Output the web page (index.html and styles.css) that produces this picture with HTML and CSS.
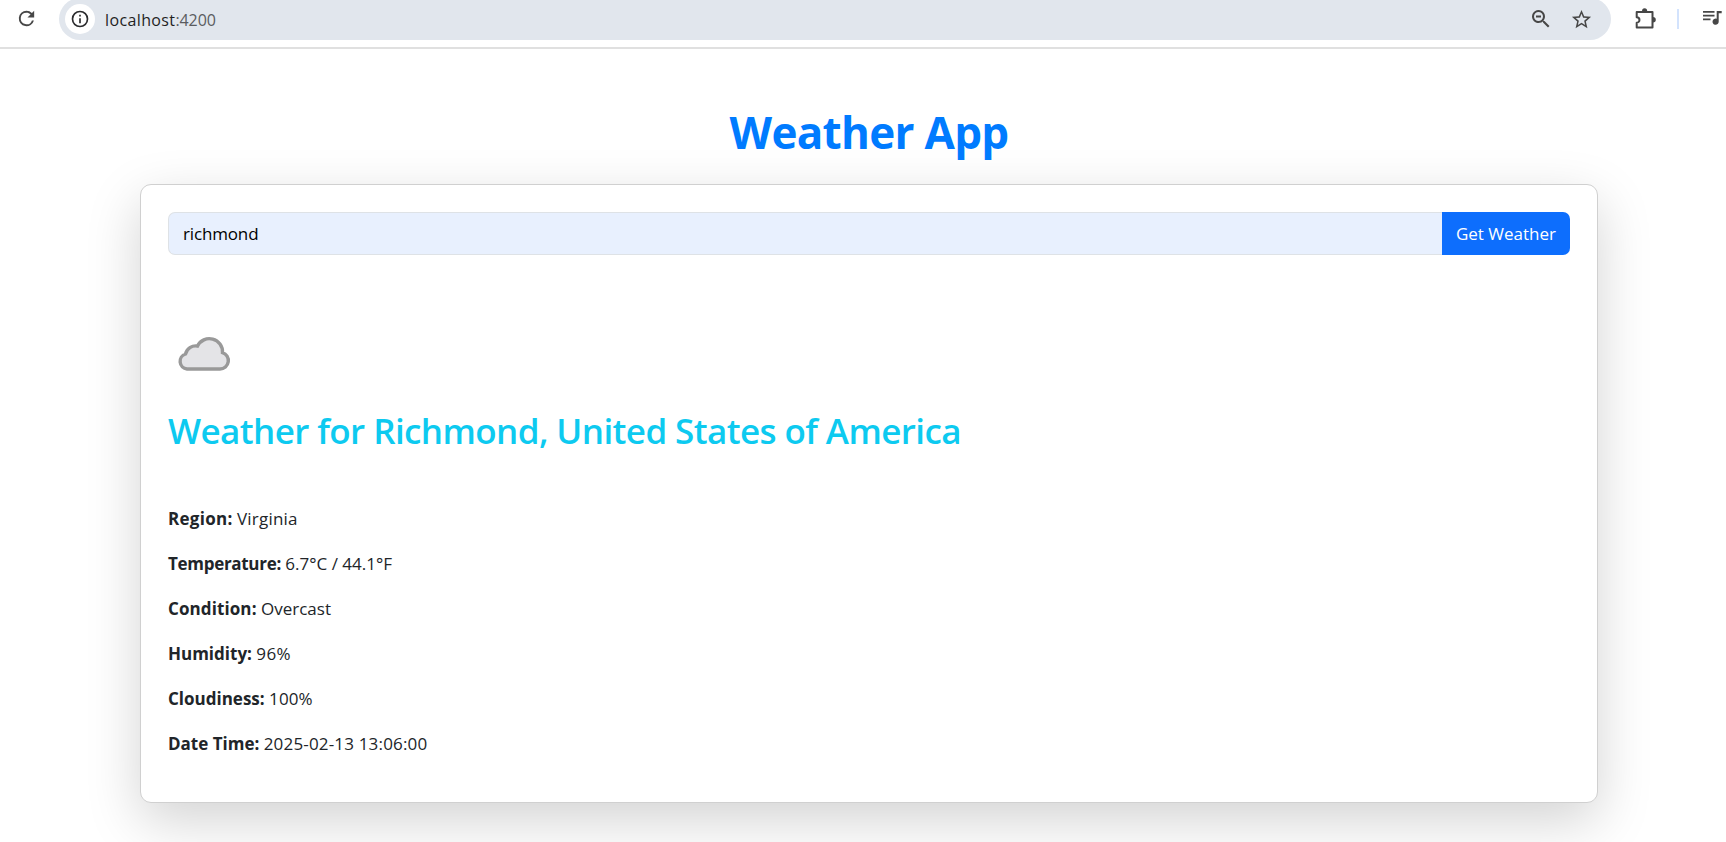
FILE: index.html
```html
<!DOCTYPE html>
<html lang="en">
<head>
<meta charset="utf-8">
<title>Weather App</title>
<link rel="stylesheet" href="styles.css">
</head>
<body>
<header class="toolbar">
  <svg class="reload" viewBox="0 0 24 24"><path d="M17.65 6.35A7.96 7.96 0 0 0 12 4a8 8 0 1 0 7.73 10h-2.08A6 6 0 1 1 12 6c1.66 0 3.14.69 4.22 1.78L13 11h7V4z"/></svg>
  <div class="address">
    <span class="site-info"><svg viewBox="0 0 24 24"><path d="M11 17h2v-6h-2v6zm0-8h2V7h-2v2zm1-7a10 10 0 1 0 0 20 10 10 0 0 0 0-20zm0 18a8 8 0 1 1 0-16 8 8 0 0 1 0 16z"/></svg></span>
    <span class="url"><span class="host">localhost</span><span class="port">:4200</span></span>
    <svg class="zoom-out" viewBox="0 0 24 24"><path d="M15.5 14h-.79l-.28-.27A6.5 6.5 0 1 0 13.73 14.43l.27.28v.79l5 4.99L20.49 19zM9.5 14a4.5 4.5 0 1 1 0-9 4.5 4.5 0 0 1 0 9zM7 8.6h5v1.8H7z"/></svg>
    <svg class="star" viewBox="0 0 24 24"><path d="M22 9.24l-7.19-.62L12 2 9.19 8.63 2 9.24l5.46 4.73L5.82 21 12 17.27 18.18 21l-1.63-7.03zM12 15.4l-3.76 2.27 1-4.28-3.32-2.88 4.38-.38L12 6.1l1.71 4.04 4.38.38-3.32 2.88 1 4.28z"/></svg>
  </div>
  <svg class="extensions" viewBox="0 0 22 22"><path d="M2.7 5H18.500V20.500H2.700V15.700A2.600 2.600 0 0 0 2.700 10.200Z" fill="none" stroke="#474747" stroke-width="2" stroke-linejoin="round"/><path d="M8 4.200a2.600 3 0 0 1 5.200 0zM19 10a2.800 2.700 0 0 1 0 5.400z"/></svg>
  <span class="divider"></span>
  <svg class="media" viewBox="0 0 20 16"><path d="M0 1h11.500v1.800H0zM0 4.700h11.500v1.800H0zM0 8.400h7.500v1.800H0zM13.700 1h5v2.200h-3V11.700a3.100 3.100 0 1 1-2-2.900z"/></svg>
</header>
<main class="container">
  <h1 class="title">Weather App</h1>
  <section class="card">
    <form class="search">
      <div class="field">richmond</div>
      <button class="submit" type="button">Get Weather</button>
    </form>
    <svg class="cloud" viewBox="0 0 72 72"><path d="M19 51H52A8.400 8.400 0 0 0 54.500 34.600A13.200 13.200 0 0 0 29.500 28A10.500 10.500 0 0 0 17.500 36A7.700 7.700 0 0 0 19 51Z" fill="#e4e4e7" stroke="#999" stroke-width="3.4"/></svg>
    <h2 class="place">Weather for Richmond, United States of America</h2>
    <p class="row region"><strong>Region:</strong> <span>Virginia</span></p>
    <p class="row temperature"><strong>Temperature:</strong> <span>6.7°C / 44.1°F</span></p>
    <p class="row condition"><strong>Condition:</strong> <span>Overcast</span></p>
    <p class="row humidity"><strong>Humidity:</strong> <span>96%</span></p>
    <p class="row cloudiness"><strong>Cloudiness:</strong> <span>100%</span></p>
    <p class="row datetime"><strong>Date Time:</strong> <span>2025-02-13 13:06:00</span></p>
  </section>
</main>
</body>
</html>
```
FILE: styles.css
```css
* { box-sizing: border-box; }

body {
  margin: 0;
  height: 842px;
  overflow: hidden;
  background: #fff;
  color: #212529;
  font-family: "Open Sans", "Noto Sans", sans-serif;
  font-size: 17px;
  line-height: 27px;
}

svg { display: block; flex: none; fill: #474747; }

.toolbar {
  display: flex;
  align-items: flex-start;
  height: 49px;
  border-bottom: 2px solid #e0e0e0;
}
.reload { width: 23px; height: 23px; margin: 7px 21px 0 15px; }
.address {
  display: flex;
  align-items: center;
  width: 1552px;
  height: 42px;
  margin-top: -2px;
  padding-left: 6px;
  border-radius: 21px;
  background: #e1e6ed;
}
.site-info {
  display: flex;
  align-items: center;
  justify-content: center;
  width: 30px;
  height: 30px;
  border-radius: 50%;
  background: #fff;
}
.site-info svg { width: 20px; height: 20px; fill: #2a2b2d; }
.url { flex: 1; margin-left: 10px; padding-top: 2px; font-size: 16px; color: #1f1f1f; }
.host { letter-spacing: .38px; }
.port { letter-spacing: -.1px; color: #5a5c60; }
.zoom-out { width: 24px; height: 24px; margin-right: 17px; }
.star { width: 23px; height: 23px; margin-right: 18px; }
.extensions { width: 22px; height: 22px; margin: 7px 0 0 23px; }
.divider { width: 2px; height: 20px; margin: 9px 0 0 21px; background: #d3e3fd; }
.media { width: 20px; height: 16px; margin: 10px 0 0 24px; }

.container { width: 1458px; margin: 0 0 0 140px; padding-top: 56px; }

.title {
  margin: 0 0 25px;
  font-size: 44px;
  line-height: 54px;
  font-weight: 700;
  letter-spacing: -.7px;
  text-align: center;
  color: #007bff;
}
.card {
  height: 619px;
  padding: 27px;
  border: 1px solid #d0d0d0;
  border-radius: 11px;
  background: #fff;
  box-shadow: 0 18px 54px rgba(0, 0, 0, .175);
}
.search { display: flex; height: 43px; margin: 0; }
.field {
  flex: 1;
  padding: 7px 14px;
  border: 1px solid #dee2e6;
  border-right: 0;
  border-radius: 7px 0 0 7px;
  background: #e8f0fe;
  color: #000;
  letter-spacing: -.15px;
}
.submit {
  width: 128px;
  padding: 0;
  border: 0;
  border-radius: 0 7px 7px 0;
  background: #0d6efd;
  color: #fff;
  font: inherit;
}
.cloud { width: 72px; height: 72px; margin-top: 63px; }
.place {
  margin: 19px 0 53px;
  font-size: 35px;
  line-height: 43px;
  font-weight: 600;
  letter-spacing: -.59px;
  color: #0dcaf0;
  white-space: nowrap;
}
.row { margin: 0 0 18px; }
.region strong { letter-spacing: .28px; }
.region span { letter-spacing: .2px; }
.temperature strong { letter-spacing: -.3px; }
.condition strong { letter-spacing: .1px; }
.humidity span { letter-spacing: .35px; }
.cloudiness span { letter-spacing: .1px; }
.datetime span { letter-spacing: .17px; }
```
